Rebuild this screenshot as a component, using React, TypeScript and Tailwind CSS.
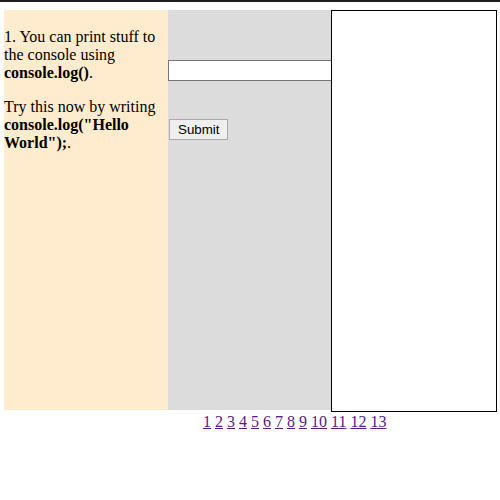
export default function App() {
  const pages = [1, 2, 3, 4, 5, 6, 7, 8, 9, 10, 11, 12, 13];
  return (
    <div className="min-h-[500px] bg-white text-black font-['Liberation_Serif',serif] text-[16px] leading-[18px]">
      {/* top rule */}
      <div className="h-[2px] bg-[#1e1e1e]" />

      <div className="mt-[8px] pl-[4px] flex items-start">
        {/* lesson text */}
        <div className="w-[164px] h-[400px] bg-[#ffebcd] pt-[18px]">
          <p>
            1. You can print stuff to the console using <b>console.log()</b>.
          </p>
          <p className="mt-[16px]">
            Try this now by writing <b>console.log("Hello World");</b>.
          </p>
        </div>

        {/* input column */}
        <div className="w-[163px] h-[400px] bg-[#dcdcdc] overflow-hidden pt-[50px]">
          <input
            type="text"
            className="block w-[170px] h-[21px] bg-white border border-[#767676] px-[2px] text-[13.33px] font-['Liberation_Sans',sans-serif]"
          />
          <button className="block mt-[38px] ml-[1px] h-[21px] px-[8px] bg-[#efefef] border border-[#aaaaaa] text-[13.33px] leading-none font-['Liberation_Sans',sans-serif]">
            Submit
          </button>
        </div>

        {/* output box */}
        <div className="w-[166px] h-[402px] border border-black bg-white" />
      </div>

      {/* page links */}
      <div className="pl-[203px] mt-[1px]">
        {pages.map((n, i) => (
          <span key={n}>
            <a href="#" className="underline text-[#551a8b]">
              {n}
            </a>
            {i < pages.length - 1 ? " " : ""}
          </span>
        ))}
      </div>
    </div>
  );
}
